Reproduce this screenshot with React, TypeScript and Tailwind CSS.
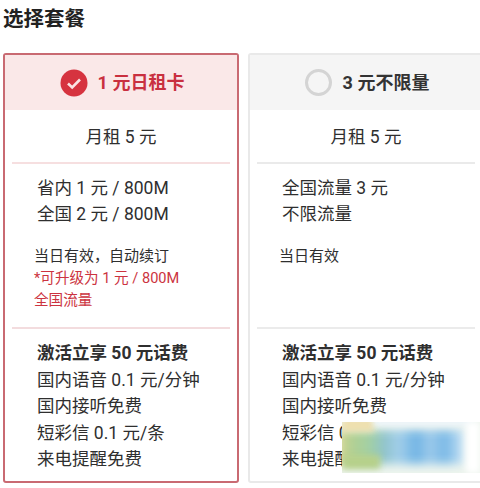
const FONT = "[font-family:Roboto,'Noto_Sans_CJK_SC',sans-serif]";

function Check() {
  return (
    <svg width="28" height="28" viewBox="0 0 28 28" className="shrink-0">
      <circle cx="14" cy="14" r="13.5" fill="#d6333f" />
      <path d="M8 14.5l4.2 4L20 10.5" fill="none" stroke="#fbe3e3" strokeWidth="2.6" />
    </svg>
  );
}

function Plan(props: {
  active: boolean;
  title: string;
  lines: string[];
  notes: string[];
  red: string[];
  bottom: string[];
}) {
  const { active, title, lines, notes, red, bottom } = props;
  return (
    <div
      className={
        active
          ? "w-[236px] h-[430px] shrink-0 rounded-[3px] border-2 border-[#c96a72] flex flex-col overflow-hidden"
          : "w-[236px] h-[430px] shrink-0 rounded-[3px] border-2 border-[#e9e9e9] flex flex-col overflow-hidden"
      }
    >
      <div
        className={
          active
            ? "h-[55px] shrink-0 bg-[#fae8e8] flex items-center justify-center gap-[10px] pl-[2px]"
            : "h-[55px] shrink-0 bg-[#f5f5f5] flex items-center justify-center gap-[11px] pl-[2px]"
        }
      >
        {active ? (
          <Check />
        ) : (
          <div className="w-[27px] h-[27px] rounded-full border-[3px] border-[#d4d4d4] shrink-0" />
        )}
        <span
          className={
            active
              ? "text-[18px] font-bold text-[#c9303f] leading-none"
              : "text-[18px] font-bold text-[#333333] leading-none"
          }
        >
          {title}
        </span>
      </div>
      <div
        className={
          active
            ? "mx-[7px] h-[54px] shrink-0 border-b-2 border-[#f6dfe0] pt-[2px] flex items-center justify-center text-[17.5px] text-[#2f2f2f]"
            : "mx-[7px] h-[54px] shrink-0 border-b-2 border-[#eaeaea] pt-[2px] flex items-center justify-center text-[17.5px] text-[#2f2f2f]"
        }
      >
        月租 5 元
      </div>
      <div
        className={
          active
            ? "mx-[7px] h-[165px] shrink-0 border-b-2 border-[#f3dcde] pt-[11px] flex flex-col"
            : "mx-[7px] h-[165px] shrink-0 border-b-2 border-[#ebebeb] pt-[11px] flex flex-col"
        }
      >
        <div className="pl-[25px] text-[17.5px] leading-[26px] text-[#2f2f2f]">
          {lines.map((l) => (
            <div key={l}>{l}</div>
          ))}
        </div>
        <div className="pl-[22px] mt-[18px] text-[15px] leading-[22px] text-[#2f2f2f]">
          {notes.map((l) => (
            <div key={l}>{l}</div>
          ))}
          {red.map((l) => (
            <div key={l} className="text-[14.6px] text-[#cc3340]">
              {l}
            </div>
          ))}
        </div>
      </div>
      <div className="pl-[32px] pt-[11px] text-[17.5px] leading-[26.6px] text-[#2f2f2f]">
        {bottom.map((l, i) => (
          <div key={l} className={i === 0 ? "font-bold whitespace-nowrap" : "whitespace-nowrap"}>
            {l}
          </div>
        ))}
      </div>
    </div>
  );
}

export default function App() {
  return (
    <div className={"relative w-[480px] h-[488px] overflow-hidden bg-white " + FONT}>
      <h1 className="pl-[3px] pt-[6px] h-[53px] text-[20.5px] leading-[27px] font-bold text-[#222222]">选择套餐</h1>
      <div className="flex gap-[9px] pl-[3px]">
        <Plan
          active
          title="1 元日租卡"
          lines={["省内 1 元 / 800M", "全国 2 元 / 800M"]}
          notes={["当日有效，自动续订"]}
          red={["*可升级为 1 元 / 800M", "全国流量"]}
          bottom={["激活立享 50 元话费", "国内语音 0.1 元/分钟", "国内接听免费", "短彩信 0.1 元/条", "来电提醒免费"]}
        />
        <Plan
          active={false}
          title="3 元不限量"
          lines={["全国流量 3 元", "不限流量"]}
          notes={["当日有效"]}
          red={[]}
          bottom={["激活立享 50 元话费", "国内语音 0.1 元/分钟", "国内接听免费", "短彩信 0.1 元/条", "来电提醒免费"]}
        />
      </div>
      <div className="absolute left-[342px] top-[422px] w-[138px] h-[51px] overflow-hidden bg-[#eef5ee]">
        <div className="absolute left-[-6px] right-[14px] top-[8px] bottom-[9px] blur-[5px] bg-[linear-gradient(90deg,#e8dc9c_0%,#b5d090_10%,#a2d0a4_26%,#8fc3cf_38%,#a5d0ea_48%,#6fb3e4_62%,#9fcbeb_72%,#78b8e6_84%,#bcdcf2_96%,#f6fafd_100%)]" />
        <div className="absolute left-0 top-[-4px] w-[32px] h-[14px] blur-[3px] bg-[#eedfae]" />
        <div className="absolute left-[32px] top-[-6px] w-[100px] h-[10px] blur-[3px] bg-[#eef5fa]" />
        <div className="absolute left-0 bottom-[4px] w-[38px] h-[14px] blur-[3px] bg-[#b6d08a]" />
        <div className="absolute right-0 top-0 bottom-0 w-[14px] blur-[3px] bg-white" />
      </div>
    </div>
  );
}
